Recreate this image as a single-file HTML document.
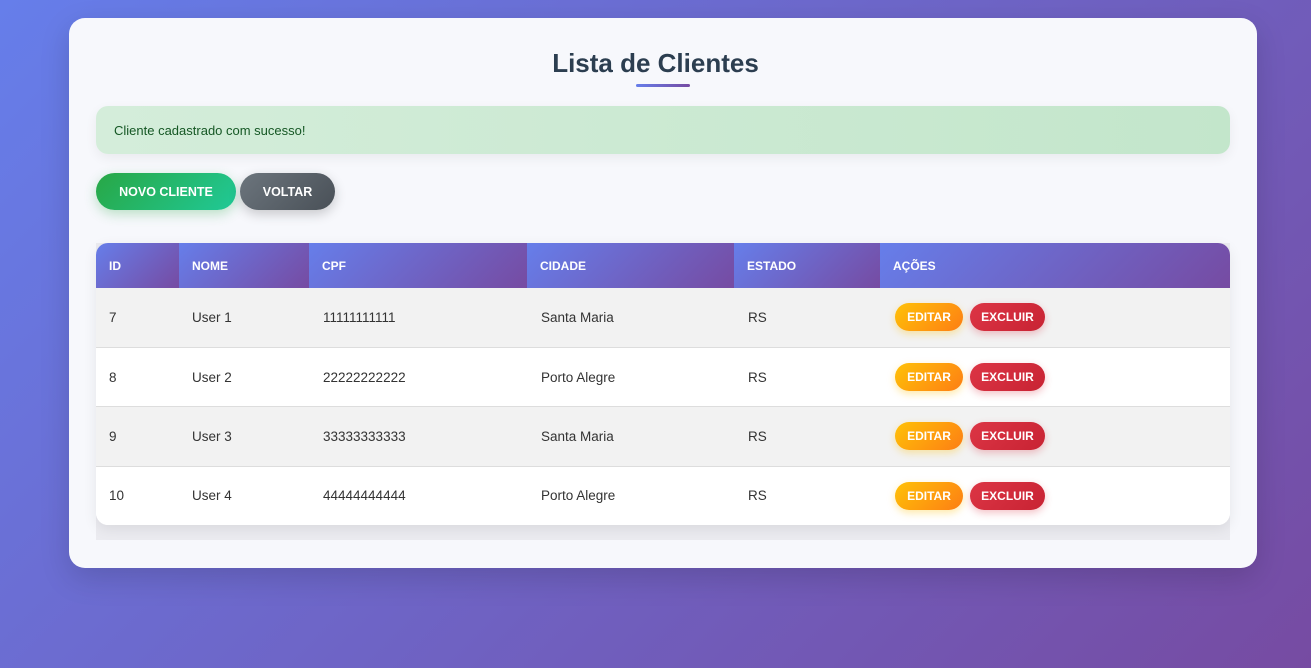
<!DOCTYPE html>
<html><head><style>
*{margin:0;padding:0;box-sizing:border-box}
body{width:1311px;height:668px;overflow:hidden;background:linear-gradient(135deg,#667eea,#764ba2);font-family:"Liberation Sans",sans-serif;position:relative}
.card{position:absolute;left:69px;top:18px;width:1188px;height:550px;background:#f7f8fc;border-radius:16px;box-shadow:0 10px 30px rgba(0,0,0,.15)}
h1{position:absolute;left:0;width:1311px;top:48px;text-align:center;font-size:26px;font-weight:bold;color:#2c3e50}
.ul{position:absolute;left:636px;top:84px;width:54px;height:3px;border-radius:2px;background:linear-gradient(90deg,#667eea,#764ba2)}
.alert{position:absolute;left:96px;top:106px;width:1134px;height:48px;border-radius:12px;background:linear-gradient(90deg,#d4edda,#c3e6cb);color:#155724;font-size:13px;line-height:50px;padding-left:18px;box-shadow:0 4px 12px rgba(0,0,0,.06)}
.btn{position:absolute;top:173px;height:37px;border-radius:19px;color:#fff;font-weight:bold;font-size:12.5px;line-height:39px;text-align:center}
.shadowbox{position:absolute;left:96px;top:243px;width:1134px;height:297px;background:#ebebf0}
.tbl{position:absolute;left:96px;top:243px;width:1134px;height:282px;border-radius:12px;overflow:hidden;background:#fff;box-shadow:0 4px 14px rgba(0,0,0,.08)}
.th{position:absolute;top:0;height:45px;background:linear-gradient(135deg,#667eea,#764ba2);color:#fff;font-weight:bold;font-size:12px;line-height:46px;padding-left:13px}
.row{position:absolute;left:0;width:1134px;border-bottom:1px solid #ddd}
.td{position:absolute;font-size:13.5px;color:#333}
.b{position:absolute;height:28px;border-radius:14px;color:#fff;font-weight:bold;font-size:12px;line-height:29px;text-align:center}
.ed{background:linear-gradient(135deg,#ffc107,#fd7e14);width:68px;left:799px;box-shadow:0 3px 8px rgba(255,193,7,.35)}
.ex{background:linear-gradient(135deg,#dc3545,#c82333);width:75px;left:874px;box-shadow:0 3px 8px rgba(220,53,69,.3)}
</style></head><body>
<div class="card"></div>
<h1>Lista de Clientes</h1>
<div class="ul"></div>
<div class="alert">Cliente cadastrado com sucesso!</div>
<div class="btn" style="left:96px;width:140px;background:linear-gradient(135deg,#28a745,#20c997);box-shadow:0 4px 12px rgba(40,167,69,.3)">NOVO CLIENTE</div>
<div class="btn" style="left:240px;width:95px;background:linear-gradient(135deg,#6c757d,#495057);box-shadow:0 4px 12px rgba(0,0,0,.2)">VOLTAR</div>
<div class="shadowbox"></div>
<div class="tbl">
<div class="th" style="left:0;width:83px">ID</div>
<div class="th" style="left:83px;width:130px">NOME</div>
<div class="th" style="left:213px;width:218px">CPF</div>
<div class="th" style="left:431px;width:207px">CIDADE</div>
<div class="th" style="left:638px;width:146px">ESTADO</div>
<div class="th" style="left:784px;width:350px">AÇÕES</div>
<div class="row" style="top:45px;height:60px;background:#f2f2f2"><span class="td" style="left:13px;top:22px">7</span><span class="td" style="left:96px;top:22px">User 1</span><span class="td" style="left:227px;top:22px">11111111111</span><span class="td" style="left:445px;top:22px">Santa Maria</span><span class="td" style="left:652px;top:22px">RS</span><div class="b ed" style="top:15px">EDITAR</div><div class="b ex" style="top:15px">EXCLUIR</div></div>
<div class="row" style="top:105px;height:59px;background:#fff"><span class="td" style="left:13px;top:22px">8</span><span class="td" style="left:96px;top:22px">User 2</span><span class="td" style="left:227px;top:22px">22222222222</span><span class="td" style="left:445px;top:22px">Porto Alegre</span><span class="td" style="left:652px;top:22px">RS</span><div class="b ed" style="top:15px">EDITAR</div><div class="b ex" style="top:15px">EXCLUIR</div></div>
<div class="row" style="top:164px;height:60px;background:#f2f2f2"><span class="td" style="left:13px;top:22px">9</span><span class="td" style="left:96px;top:22px">User 3</span><span class="td" style="left:227px;top:22px">33333333333</span><span class="td" style="left:445px;top:22px">Santa Maria</span><span class="td" style="left:652px;top:22px">RS</span><div class="b ed" style="top:15px">EDITAR</div><div class="b ex" style="top:15px">EXCLUIR</div></div>
<div class="row" style="top:224px;height:58px;background:#fff;border:none"><span class="td" style="left:13px;top:21px">10</span><span class="td" style="left:96px;top:21px">User 4</span><span class="td" style="left:227px;top:21px">44444444444</span><span class="td" style="left:445px;top:21px">Porto Alegre</span><span class="td" style="left:652px;top:21px">RS</span><div class="b ed" style="top:15px">EDITAR</div><div class="b ex" style="top:15px">EXCLUIR</div></div>
</div>
</body></html>
